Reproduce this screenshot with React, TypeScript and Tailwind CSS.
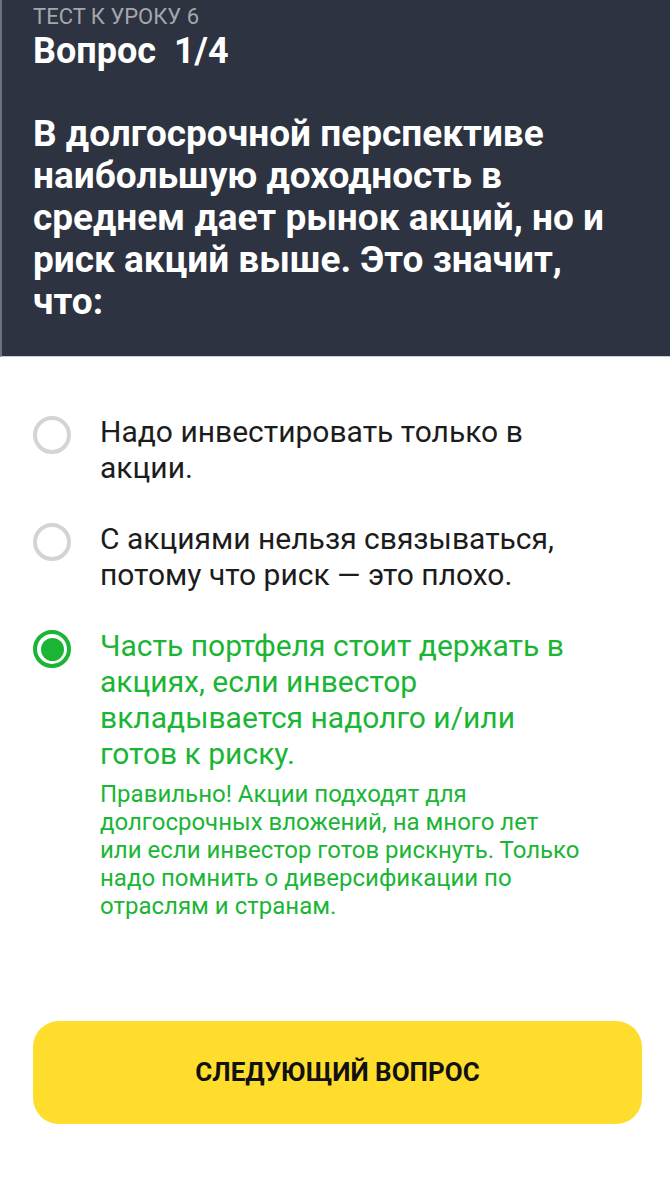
import React from 'react'

type Option = {
  text: string
  selected?: boolean
  note?: string[]
}

const options: Option[] = [
  { text: 'Надо инвестировать только в акции.' },
  { text: 'С акциями нельзя связываться, потому что риск — это плохо.' },
  {
    text: 'Часть портфеля стоит держать в акциях, если инвестор вкладывается надолго и/или готов к риску.',
    selected: true,
    // lines kept as in the app
    note: [
      'Правильно! Акции подходят для',
      'долгосрочных вложений, на много лет',
      'или если инвестор готов рискнуть. Только',
      'надо помнить о диверсификации по',
      'отраслям и странам.',
    ],
  },
]

function Radio({ checked }: { checked?: boolean }) {
  if (checked) {
    return (
      <div className="w-[38px] h-[38px] rounded-full border-4 border-[#1bb536] flex items-center justify-center shrink-0">
        <div className="w-[23px] h-[23px] rounded-full bg-[#1bb536]"></div>
      </div>
    )
  }
  return <div className="w-[38px] h-[38px] rounded-full border-4 border-[#d4d4d4] shrink-0"></div>
}

export default function App() {
  return (
    <div className="w-[670px] h-[1200px] bg-white font-['Roboto',sans-serif] flex flex-col">
      {/* header */}
      <div className="h-[357px] shrink-0 bg-[#2d3340] border-l-2 border-b border-l-[#6b7280] border-b-[#c9ccd1] pl-[31px] pr-[45px] pt-[4px]">
        <div className="text-[22px] leading-[26px] text-[#a3a7ae] uppercase">Тест к уроку 6</div>
        <div className="text-[36px] leading-[42px] font-bold text-white">Вопрос&nbsp; 1/4</div>
        <div className="text-[37px] leading-[42px] font-bold text-white mt-[41px]">
          В долгосрочной перспективе наибольшую доходность в среднем дает рынок акций, но и риск акций выше. Это значит, что:
        </div>
      </div>

      {/* options */}
      <div className="flex flex-col gap-[35px] pt-[57px] pl-[33px] pr-[80px]">
        {options.map((o, i) => (
          <div key={i} className="flex gap-[29px]">
            <div className="pt-[2px]">
              <Radio checked={o.selected} />
            </div>
            <div className="flex flex-col">
              <div className={`text-[30px] leading-[36px] ${o.selected ? 'text-[#1bb536]' : 'text-[#1c1c1c]'}`}>
                {o.text}
              </div>
              {o.note && (
                <div className="text-[24px] leading-[28px] text-[#1bb536] mt-[8px] whitespace-nowrap">
                  {o.note.map((line, j) => (
                    <div key={j}>{line}</div>
                  ))}
                </div>
              )}
            </div>
          </div>
        ))}
      </div>

      <div className="flex-1"></div>

      <div className="pl-[33px] pr-[28px] pb-[76px]">
        <button className="w-full h-[103px] rounded-[26px] bg-[#ffdd2d] text-[26px] font-bold text-[#111] uppercase">
          Следующий вопрос
        </button>
      </div>
    </div>
  )
}
